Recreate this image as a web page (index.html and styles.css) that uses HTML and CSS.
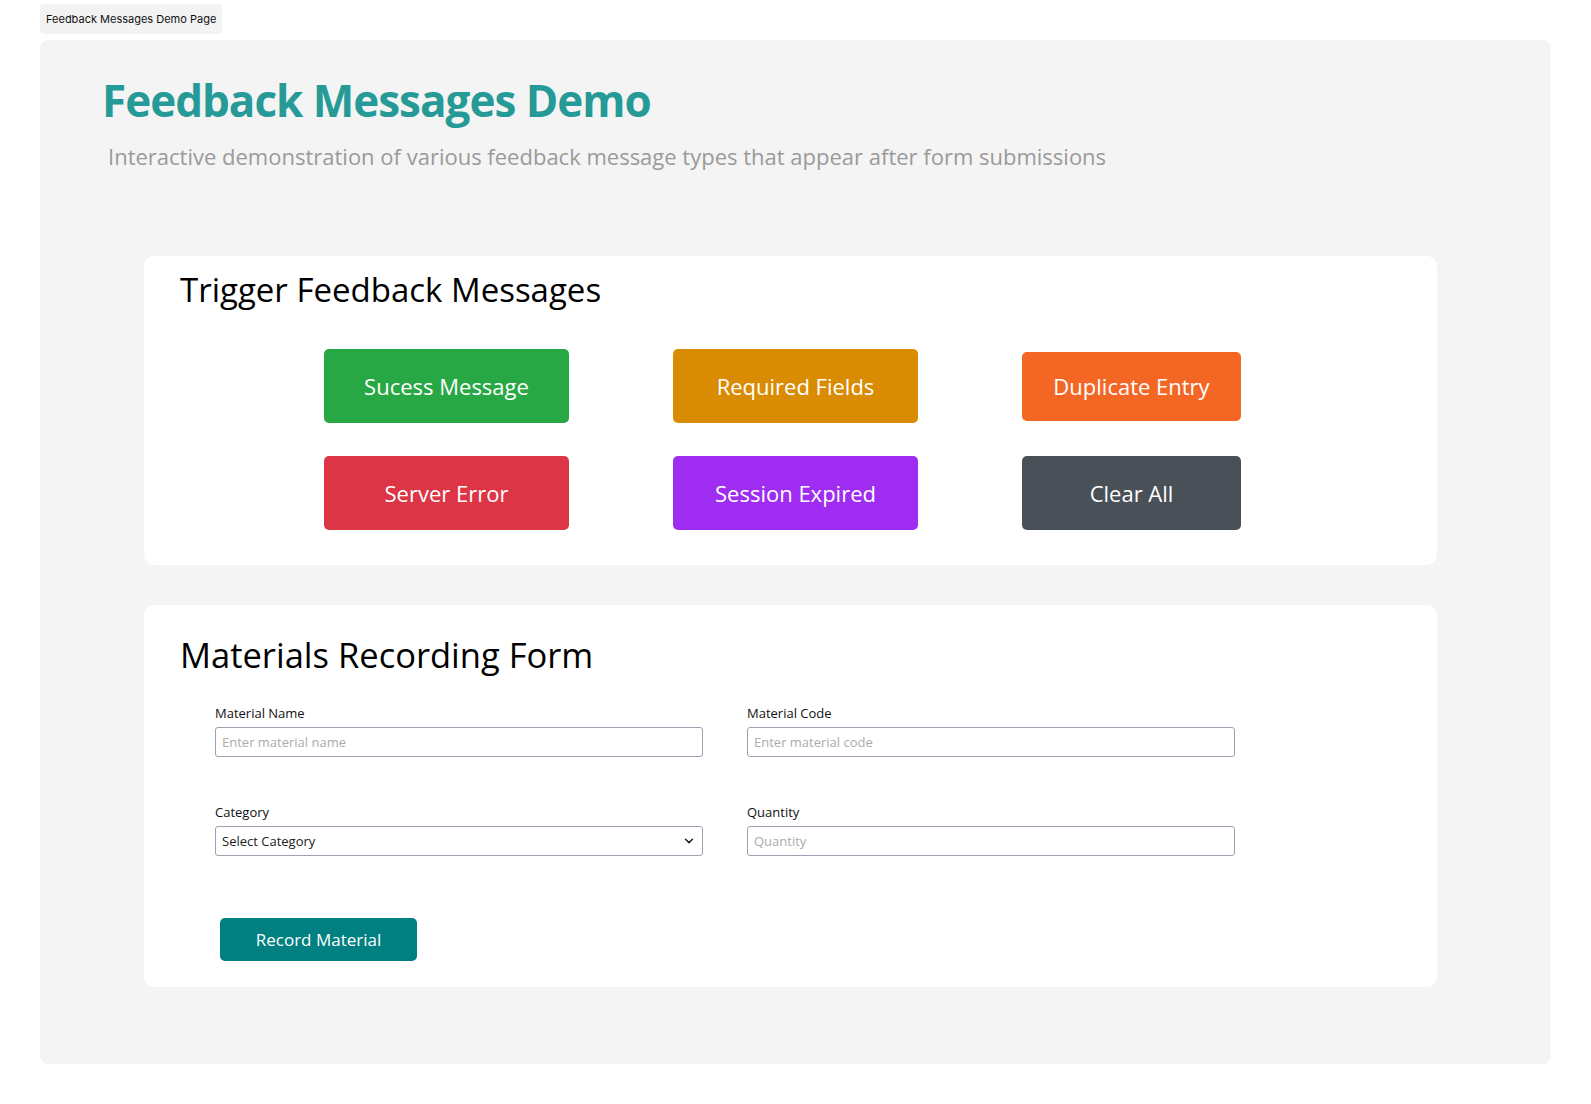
FILE: index.html
```html
<!DOCTYPE html>
<html lang="en">
<head>
<meta charset="utf-8">
<title>Feedback Messages Demo Page</title>
<link rel="stylesheet" href="styles.css">
</head>
<body>
<div class="page">
  <div class="tab">Feedback Messages Demo Page</div>
  <main class="container">
    <h1 class="title">Feedback Messages Demo</h1>
    <p class="subtitle">Interactive demonstration of various feedback message types that appear after form submissions</p>

    <section class="card card-trigger">
      <h2 class="card-heading">Trigger Feedback Messages</h2>
      <div class="btn-grid">
        <button class="btn btn-success">Sucess Message</button>
        <button class="btn btn-required">Required Fields</button>
        <button class="btn btn-duplicate">Duplicate Entry</button>
        <button class="btn btn-error">Server Error</button>
        <button class="btn btn-session">Session Expired</button>
        <button class="btn btn-clear">Clear All</button>
      </div>
    </section>

    <section class="card card-form">
      <h2 class="card-heading card-heading-form">Materials Recording Form</h2>
      <form class="form">
        <div class="form-grid">
          <div class="field">
            <label class="label" for="mname">Material Name</label>
            <input class="input" id="mname" type="text" placeholder="Enter material name">
          </div>
          <div class="field">
            <label class="label" for="mcode">Material Code</label>
            <input class="input" id="mcode" type="text" placeholder="Enter material code">
          </div>
          <div class="field">
            <label class="label" for="mcat">Category</label>
            <div class="select-wrap">
              <select class="input select" id="mcat">
                <option>Select Category</option>
              </select>
              <svg class="chevron" width="10" height="6" viewBox="0 0 10 6" aria-hidden="true">
                <polyline points="1.5,1.2 5,4.6 8.5,1.2" fill="none" stroke="#222" stroke-width="1.5" stroke-linecap="round" stroke-linejoin="round"/>
              </svg>
            </div>
          </div>
          <div class="field">
            <label class="label" for="mqty">Quantity</label>
            <input class="input" id="mqty" type="text" placeholder="Quantity">
          </div>
        </div>
        <button type="button" class="record-btn">Record Material</button>
      </form>
    </section>
  </main>
</div>
</body>
</html>
```

FILE: styles.css
```css
* { box-sizing: border-box; }

body {
  margin: 0;
  background: #ffffff;
  font-family: "Open Sans", "Noto Sans", sans-serif;
  color: #000;
}

.page {
  padding: 4px 40px 0;
}

.tab {
  display: inline-block;
  height: 30px;
  line-height: 30px;
  padding: 0 6px 0 6px;
  background: #f3f3f3;
  border-radius: 4px;
  font-family: "Inter", "Liberation Sans", sans-serif;
  font-size: 11px;
  color: #111;
}

.container {
  margin-top: 6px;
  background: #f4f4f4;
  border-radius: 8px;
  padding: 38px 62px 77px;
}

.title {
  margin: 0;
  font-size: 44px;
  line-height: 44px;
  font-weight: 700;
  letter-spacing: -1px;
  color: #269a97;
}

.subtitle {
  margin: 23px 0 0 6px;
  font-size: 22px;
  line-height: 22px;
  color: #9a9a9a;
}

.card {
  margin-left: 42px;
  width: 1293px;
  background: #ffffff;
  border-radius: 10px;
}

.card-trigger {
  margin-top: 89px;
  padding: 18px 36px 35px;
}

.card-form {
  margin-top: 40px;
  padding: 34px 36px 26px;
}

.card-heading {
  margin: 0;
  font-size: 33px;
  line-height: 32px;
  font-weight: 500;
  color: #000;
}

.card-heading-form {
  font-size: 34.5px;
}

.btn-grid {
  margin-top: 43px;
  padding-left: 144px;
  display: grid;
  grid-template-columns: 245px 245px 219px;
  grid-auto-rows: 74px;
  column-gap: 104px;
  row-gap: 33px;
  align-items: center;
}

.btn {
  height: 74px;
  border: none;
  border-radius: 5px;
  font-family: "Open Sans", "Noto Sans", sans-serif;
  font-size: 22px;
  font-weight: 500;
  color: #ffffff;
  cursor: pointer;
}

.btn-success { background: #28a745; }
.btn-required { background: #d98b02; }
.btn-duplicate { background: #f36624; height: 69px; }
.btn-error { background: #dc3545; }
.btn-session { background: #9f2cf1; }
.btn-clear { background: #495057; }

.form {
  margin: 36px 0 0 35px;
}

.form-grid {
  display: grid;
  grid-template-columns: 488px 488px;
  column-gap: 44px;
  row-gap: 49px;
}

.field {
  display: flex;
  flex-direction: column;
}

.label {
  font-size: 13px;
  line-height: 13px;
  margin-bottom: 7px;
  color: #111;
}

.input {
  height: 30px;
  border: 1px solid #a0a0b0;
  border-radius: 3px;
  padding: 0 6px;
  font-family: "Open Sans", "Noto Sans", sans-serif;
  font-size: 13px;
  color: #222;
  background: #fff;
}

.input::placeholder {
  color: #ababab;
}

.select-wrap {
  position: relative;
  display: flex;
}

.select {
  flex: 1;
  appearance: none;
  -webkit-appearance: none;
  padding: 0 24px 0 6px;
}

.chevron {
  position: absolute;
  right: 9px;
  top: 12px;
  pointer-events: none;
}

.record-btn {
  margin: 62px 0 0 5px;
  width: 197px;
  height: 43px;
  border: none;
  border-radius: 5px;
  background: #008080;
  color: #ffffff;
  font-family: "Open Sans", "Noto Sans", sans-serif;
  font-size: 17px;
  font-weight: 400;
}
```
